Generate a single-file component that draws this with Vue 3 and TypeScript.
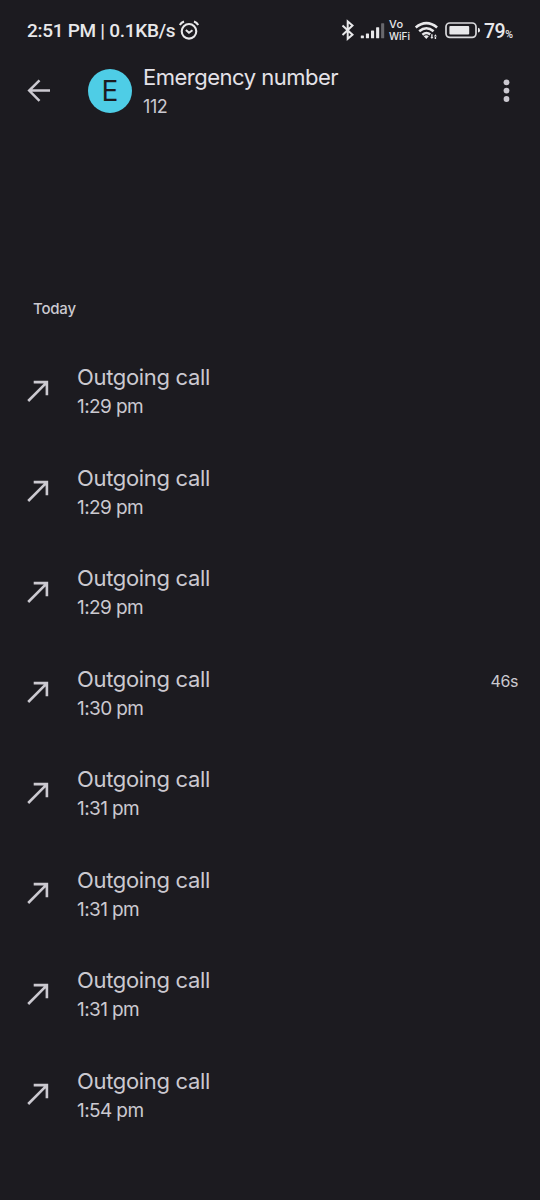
<script setup lang="ts">
interface Call {
  time: string
  duration?: string
}

const calls: Call[] = [
  { time: '1:29 pm' },
  { time: '1:29 pm' },
  { time: '1:29 pm' },
  { time: '1:30 pm', duration: '46s' },
  { time: '1:31 pm' },
  { time: '1:31 pm' },
  { time: '1:31 pm' },
  { time: '1:54 pm' },
]
</script>

<template>
  <main class="screen">
    <div class="status">
      <span class="clock">2:51 PM | 0.1KB/s</span>
      <svg class="alarm" width="22" height="22" viewBox="0 0 22 22" fill="none" stroke="#e8e8ea">
        <circle cx="11" cy="11.3" r="7.3" stroke-width="2.1" />
        <path d="M7.9 9.9l3.1 2.9 3.5-2.5" stroke-width="2" />
        <path d="M1.8 5.1Q3.2 2.5 6 1.5M20.2 5.1Q18.8 2.5 16 1.5" stroke-width="2.1" />
      </svg>
      <svg class="icons" width="142" height="24" viewBox="340 19 142 24" fill="none">
        <path d="M342.5 25.5l10 9.2-4.8 4.1V21.4l4.8 4.1-10 9.4" stroke="#e8e8ea" stroke-width="2" />
        <g fill="#e8e8ea">
          <rect x="360.8" y="35.5" width="3.1" height="2.8" rx=".6" />
          <rect x="365.9" y="33.5" width="3.1" height="4.8" rx=".6" />
          <rect x="371" y="30.5" width="3.1" height="7.8" rx=".6" />
          <rect x="376.1" y="27.2" width="3.1" height="11.1" rx=".6" />
          <rect x="381.1" y="23.2" width="3.1" height="15.1" rx=".6" fill="#68686c" />
        </g>
        <g stroke="#e8e8ea" stroke-width="2.6">
          <path d="M415.7 27.5Q426.4 18.9 437.1 27.5" />
          <path d="M419.2 31.2Q426.4 25.3 433.6 31.2" />
          <path d="M422.4 34.7Q426.4 31.5 430.2 34.4" />
        </g>
        <path d="M423.7 36.2Q426.2 34.2 428.8 36.2L426.3 38.9Z" fill="#e8e8ea" />
        <path d="M430.4 37h3l-1.5 2zM433.9 36.5h3l-1.5-2.3zM431.2 34.3h1.4v3h-1.4zM434.7 36h1.4v3h-1.4z" fill="#e8e8ea" />
        <rect x="446" y="23" width="30" height="14.4" rx="3.8" stroke="#d9d9dc" stroke-width="1.7" />
        <rect x="449.4" y="26" width="19.8" height="8.6" rx="1" fill="#e8e8ea" />
        <path d="M478 27.8q2 .2 2 2.4t-2 2.4z" fill="#e8e8ea" />
      </svg>
      <span class="vowifi"><span>Vo</span><span>WiFi</span></span>
      <span class="battery">79<small>%</small></span>
    </div>

    <header class="bar">
      <svg class="back" width="24" height="24" viewBox="0 0 24 24" fill="none" stroke="#cbc9d0" stroke-width="2.5">
        <path d="M23 11.6H3M12.5 1.3L2.2 11.6l10.3 10.3" />
      </svg>
      <div class="avatar">E</div>
      <div class="who">
        <h1>Emergency number</h1>
        <p>112</p>
      </div>
      <svg class="more" width="8" height="24" viewBox="0 0 8 24" fill="#cbc9d0">
        <circle cx="3.5" cy="3.3" r="2.9" />
        <circle cx="3.5" cy="11.6" r="2.9" />
        <circle cx="3.5" cy="20" r="2.9" />
      </svg>
    </header>

    <h2 class="day">Today</h2>

    <ul class="calls">
      <li v-for="(call, i) in calls" :key="i" class="call">
        <svg class="arrow" width="22" height="22" viewBox="0 0 22 22" fill="none" stroke="#cbc9d0" stroke-width="2.6">
          <path d="M1.2 21L20 2.2M6.7 2.1h13.2v13.2" />
        </svg>
        <div class="info">
          <p class="title">Outgoing call</p>
          <p class="time">{{ call.time }}</p>
        </div>
        <span v-if="call.duration" class="duration">{{ call.duration }}</span>
      </li>
    </ul>
  </main>
</template>

<style>
body {
  margin: 0;
  background: #1c1b20;
}
</style>

<style scoped>
.screen {
  width: 540px;
  height: 1200px;
  overflow: hidden;
  background: #1c1b20;
  color: #cbc9d0;
  font-family: Inter, "Open Sans", sans-serif;
}
h1, h2, p, ul {
  margin: 0;
  padding: 0;
  font-weight: 400;
}
.status {
  position: relative;
  display: flex;
  align-items: center;
  height: 62px;
  box-sizing: border-box;
  padding-left: 27px;
  color: #e8e8ea;
  font-family: Roboto, sans-serif;
  white-space: nowrap;
}
.clock {
  width: 149px;
  margin-bottom: 1px;
  font-size: 19px;
  font-weight: 500;
  letter-spacing: -0.28px;
}
.alarm {
  margin-left: 2px;
}
.icons {
  margin-left: 140px;
}
.vowifi {
  position: absolute;
  left: 389px;
  top: 19px;
  display: flex;
  flex-direction: column;
  font: 500 10px/11.5px Inter, sans-serif;
}
.vowifi span:first-child {
  font-size: 11px;
  letter-spacing: 0.2px;
}
.battery {
  margin-left: 2px;
  font-size: 19.5px;
  font-weight: 500;
  letter-spacing: -0.5px;
}
.battery small {
  font-size: 10.5px;
}
.bar {
  display: flex;
  align-items: center;
  height: 57px;
  padding: 0 29px 0 27px;
}
.avatar {
  display: flex;
  align-items: center;
  justify-content: center;
  width: 44px;
  height: 44px;
  margin-left: 37px;
  border-radius: 50%;
  background: #4ecde6;
  color: #1c1b20;
  font-size: 28px;
}
.who {
  flex: 1;
  margin: 2px 0 0 11px;
}
.who h1 {
  color: #e4e2e8;
  font-size: 22px;
  letter-spacing: -0.5px;
  line-height: 29px;
  white-space: nowrap;
}
.who p {
  font-size: 18px;
  letter-spacing: -0.4px;
  line-height: 29px;
}
.day {
  margin: 180px 0 0 33px;
  font-size: 15px;
  font-weight: 500;
  letter-spacing: -0.2px;
  line-height: 20px;
}
.calls {
  margin-top: 21.5px;
  list-style: none;
}
.call {
  display: flex;
  align-items: center;
  height: 100.5px;
  padding: 0 22px 0 27px;
}
.info {
  flex: 1;
  margin: 4px 0 0 28px;
}
.title {
  font-size: 22px;
  letter-spacing: -0.34px;
  line-height: 29px;
}
.time {
  font-size: 19px;
  letter-spacing: -0.6px;
  line-height: 30px;
}
.duration {
  margin-top: -23px;
  font-size: 16px;
  letter-spacing: -0.4px;
}
</style>
